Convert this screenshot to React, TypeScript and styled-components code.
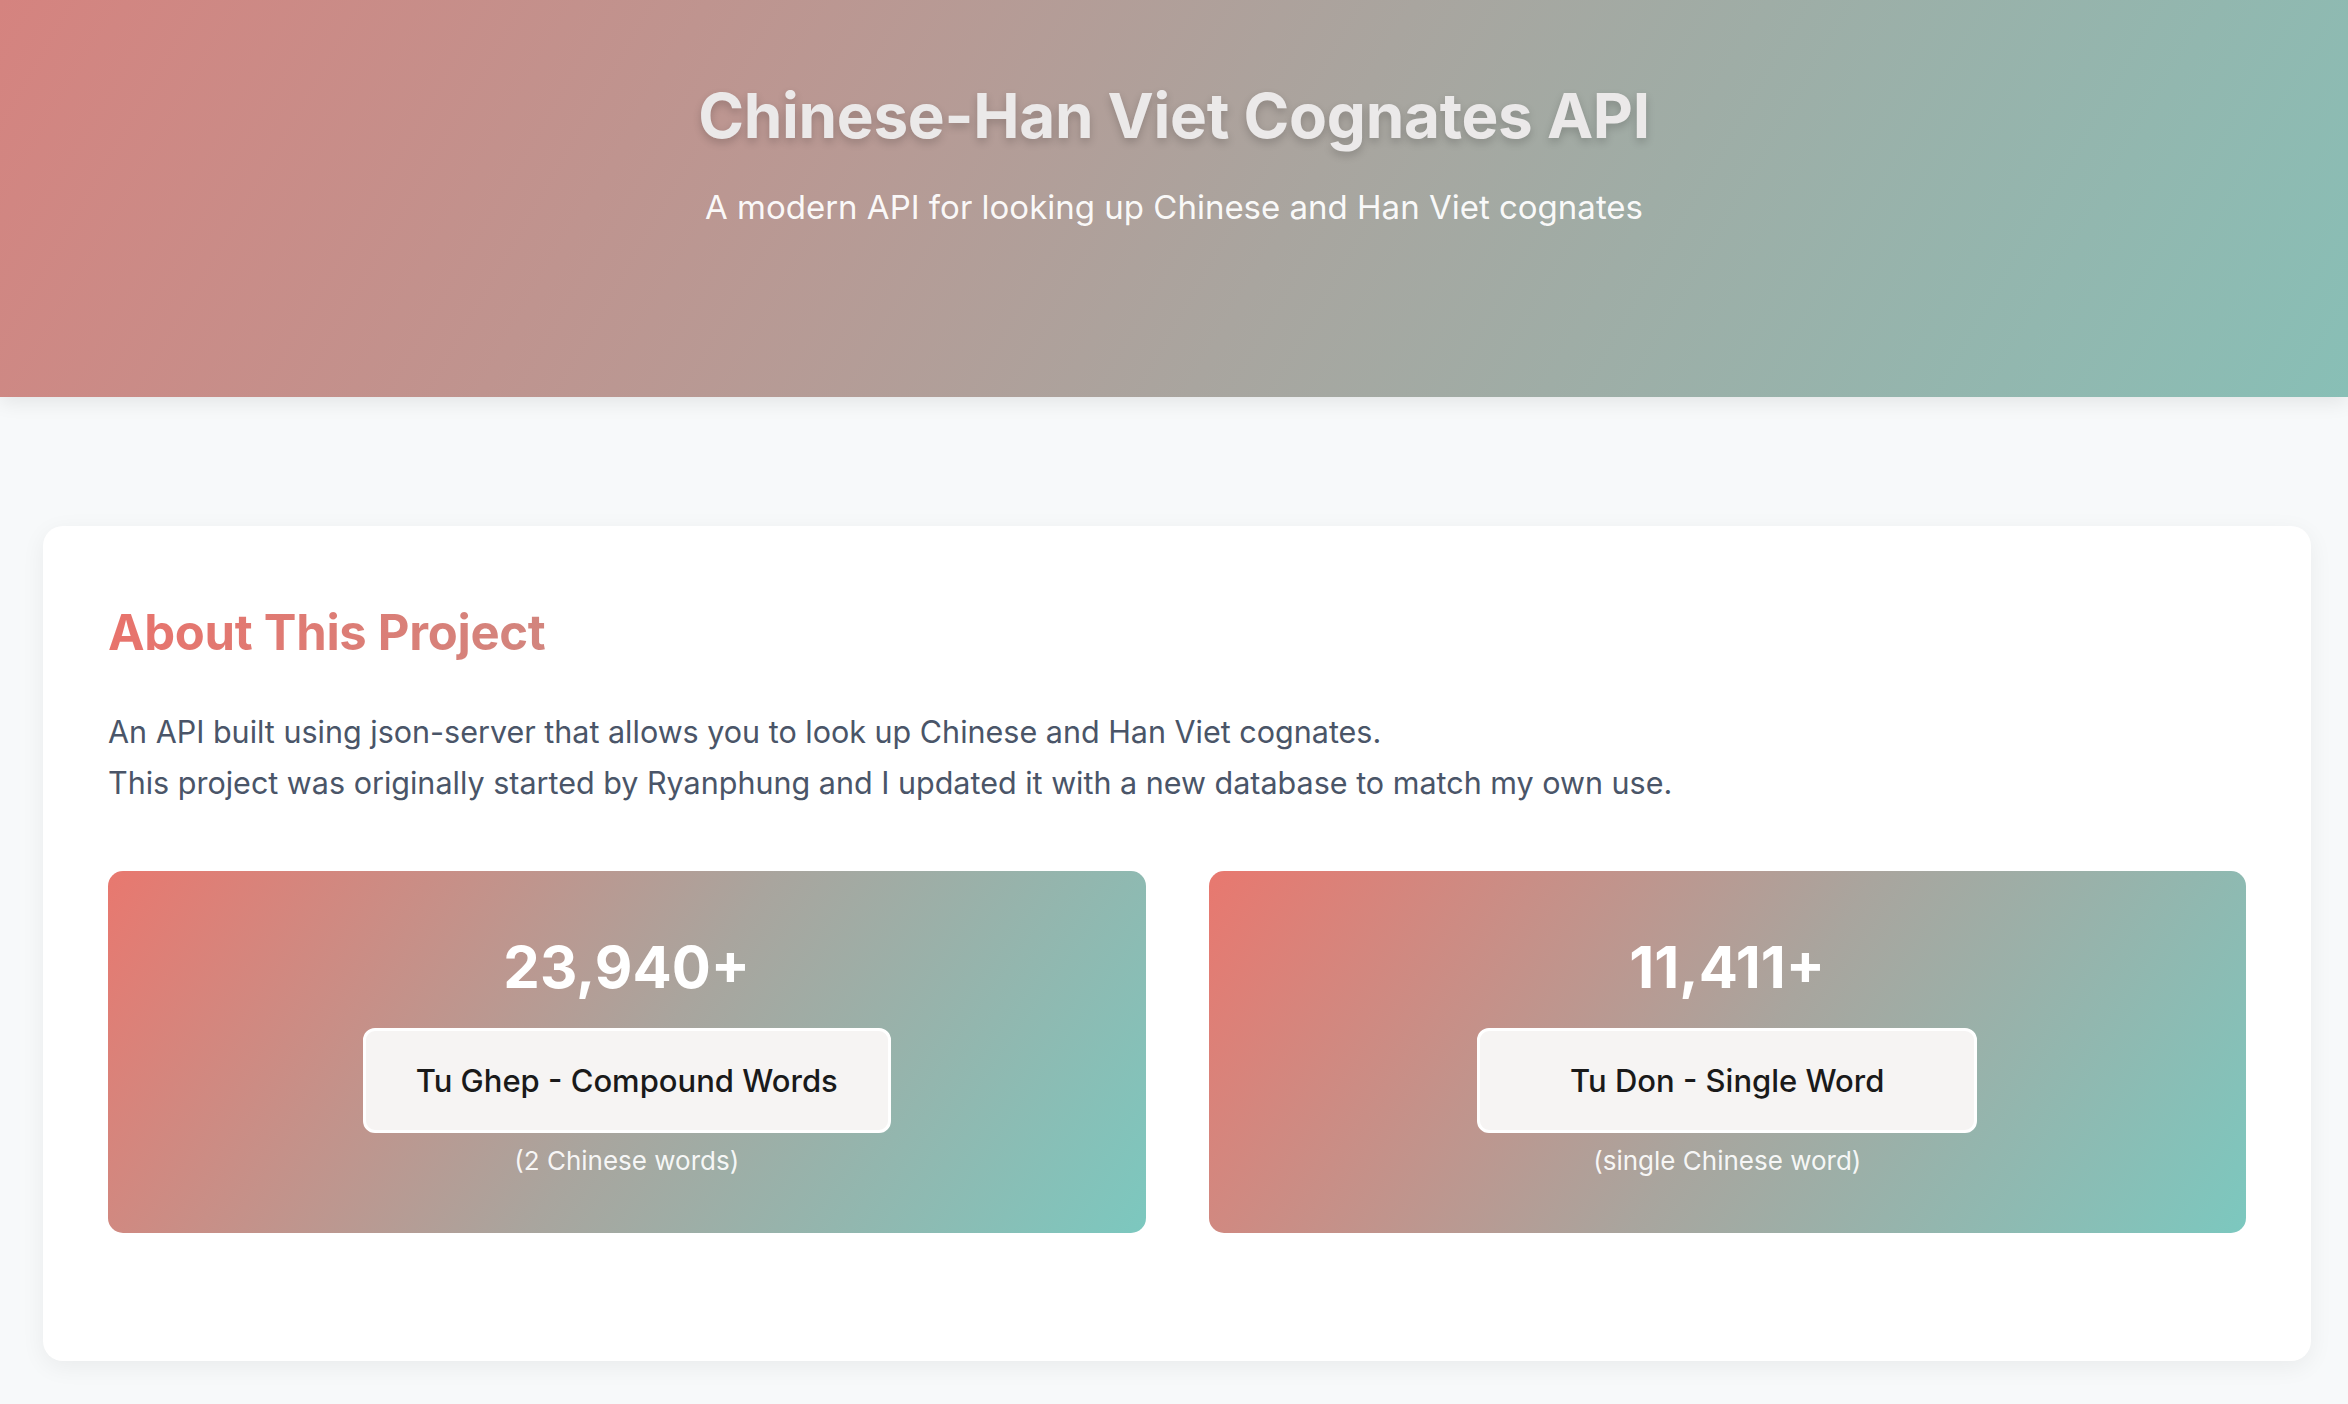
import React from 'react';
import styled, { createGlobalStyle } from 'styled-components';

const GlobalStyle = createGlobalStyle`
  html, body {
    margin: 0;
    padding: 0;
    background: #f7f9fa;
    font-family: Inter, 'Noto Sans', 'Liberation Sans', sans-serif;
    overflow: hidden;
  }
  * {
    box-sizing: border-box;
  }
`;

const Page = styled.div`
  min-height: 100vh;
  background: #f7f9fa;
`;

const Header = styled.header`
  height: 397px;
  padding-top: 79px;
  background: linear-gradient(120deg, #d5837f 0%, #a9a59f 55%, #88bfb6 100%);
  box-shadow: 0 6px 18px rgba(0, 0, 0, 0.08);
  text-align: center;
`;

const Title = styled.h1`
  margin: 0;
  font-size: 62px;
  font-weight: 700;
  line-height: 1.2;
  letter-spacing: -0.3px;
  color: #ebe9e9;
  text-shadow: 0 4px 8px rgba(0, 0, 0, 0.18);
`;

const Subtitle = styled.p`
  margin: 33px 0 0;
  font-size: 33px;
  font-weight: 400;
  line-height: 1.3;
  color: rgba(255, 255, 255, 0.95);
`;

const Main = styled.main`
  padding: 129px 37px 20px 43px;
`;

const Card = styled.section`
  background: #ffffff;
  border-radius: 20px;
  box-shadow: 0 6px 24px rgba(0, 0, 0, 0.06);
  padding: 78px 65px 128px;
`;

const Heading = styled.h2`
  margin: 0;
  font-size: 49px;
  font-weight: 700;
  line-height: 1.2;
  letter-spacing: -0.3px;
  background: linear-gradient(90deg, #e8736c 0%, #7ecbc2 100%);
  -webkit-background-clip: text;
  background-clip: text;
  color: transparent;
`;

const Text = styled.p`
  margin: 43px 0 0;
  font-size: 30.5px;
  line-height: 51px;
  color: #4a5568;
`;

const StatGrid = styled.div`
  margin-top: 63px;
  display: grid;
  grid-template-columns: 1fr 1fr;
  gap: 63px;
`;

const StatCard = styled.div`
  height: 362px;
  padding-top: 60px;
  border-radius: 15px;
  background: linear-gradient(125deg, #e8786f 0%, #a9a59e 52%, #7cc8bf 100%);
  display: flex;
  flex-direction: column;
  align-items: center;
`;

const Number = styled.div`
  font-size: 58px;
  font-weight: 700;
  line-height: 72px;
  color: #ffffff;
`;

const TypeButton = styled.button<{ $wide?: boolean }>`
  margin-top: 25px;
  height: 105px;
  padding: 0 ${({ $wide }) => ($wide ? '90px' : '50px')};
  border: 3px solid #ffffff;
  border-radius: 12px;
  background: #f6f4f3;
  font-family: inherit;
  font-size: 31px;
  font-weight: 500;
  color: #1a1a1a;
  cursor: pointer;
`;

const Note = styled.div`
  margin-top: 10px;
  font-size: 26px;
  line-height: 35px;
  color: rgba(255, 255, 255, 0.92);
`;

const stats = [
  { count: '23,940+', label: 'Tu Ghep - Compound Words', note: '(2 Chinese words)', wide: false },
  { count: '11,411+', label: 'Tu Don - Single Word', note: '(single Chinese word)', wide: true }
];

export default function App() {
  return (
    <Page>
      <GlobalStyle />
      <Header>
        <Title>Chinese-Han Viet Cognates API</Title>
        <Subtitle>A modern API for looking up Chinese and Han Viet cognates</Subtitle>
      </Header>
      <Main>
        <Card>
          <Heading>About This Project</Heading>
          <Text>
            An API built using json-server that allows you to look up Chinese and Han Viet cognates.
            <br />
            This project was originally started by Ryanphung and I updated it with a new database to match my own use.
          </Text>
          <StatGrid>
            {stats.map((s) => (
              <StatCard key={s.count}>
                <Number>{s.count}</Number>
                <TypeButton $wide={s.wide}>{s.label}</TypeButton>
                <Note>{s.note}</Note>
              </StatCard>
            ))}
          </StatGrid>
        </Card>
      </Main>
    </Page>
  );
}
